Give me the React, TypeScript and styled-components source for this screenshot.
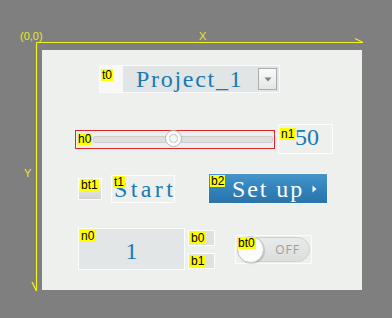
import React from "react";
import styled, { createGlobalStyle } from "styled-components";

const Global = createGlobalStyle`
  html, body { margin: 0; padding: 0; background: #7f7f7f; }
  #root { width: 392px; height: 318px; }
`;

const Stage = styled.div`
  position: relative;
  width: 392px;
  height: 318px;
  box-sizing: border-box;
  padding: 50px 0 0 42px;
  background: #7f7f7f;
  overflow: hidden;
  font-family: "Liberation Sans", Arial, sans-serif;
`;

const Canvas = styled.div`
  width: 320px;
  height: 240px;
  box-sizing: border-box;
  background: #edf0ed;
  display: flex;
  flex-direction: column;
`;

const Row = styled.div<{ top: number; left: number; gap?: number; h: number }>`
  display: flex;
  align-items: center;
  box-sizing: content-box;
  height: ${(p) => p.h}px;
  padding-top: ${(p) => p.top}px;
  padding-left: ${(p) => p.left}px;
  gap: ${(p) => p.gap ?? 0}px;
`;

const Group = styled.div<{ gap: number; column?: boolean }>`
  display: flex;
  flex-direction: ${(p) => (p.column ? "column" : "row")};
  align-items: center;
  gap: ${(p) => p.gap}px;
`;

const Axes = styled.svg`
  position: absolute;
  left: 0;
  top: 0;
  pointer-events: none;
`;

const AxisText = styled.span<{ x: number; y: number }>`
  position: absolute;
  left: ${(p) => p.x}px;
  top: ${(p) => p.y}px;
  color: #e8e829;
  font-family: "Liberation Sans", Arial, sans-serif;
  font-size: 11px;
  line-height: 11px;
`;

const Widget = styled.div<{ w: number; h: number }>`
  position: relative;
  flex: none;
  width: ${(p) => p.w}px;
  height: ${(p) => p.h}px;
  box-sizing: border-box;
`;

const Tag = styled.span<{ top?: number }>`
  position: absolute;
  left: 1px;
  top: ${(p) => p.top ?? 3}px;
  z-index: 2;
  background: #ffff00;
  color: #000;
  font-family: "Liberation Sans", Arial, sans-serif;
  font-size: 12px;
  line-height: 12px;
  height: 12px;
  padding: 0 1px;
`;

const BlueText = styled.span<{ spacing?: number }>`
  font-family: "Liberation Serif", "Times New Roman", serif;
  font-size: 24px;
  line-height: 24px;
  color: #1a78b4;
  letter-spacing: ${(p) => p.spacing ?? 0}px;
  white-space: pre;
`;

/* t0 combo */
const ComboBox = styled(Widget)`
  background: #f7f8f7;
  border: 1px solid #fbfbfb;
  display: flex;
`;
const ComboField = styled.div`
  margin-left: 23px;
  flex: 1;
  background: #e1e5e5;
  display: flex;
  align-items: center;
  padding-left: 13px;
  padding-right: 2px;
  justify-content: space-between;
`;
const DropBtn = styled.div`
  width: 19px;
  height: 22px;
  box-sizing: border-box;
  border: 1px solid #a9adad;
  background: linear-gradient(#fafafa, #e4e6e6);
  display: flex;
  align-items: center;
  justify-content: center;
`;

/* slider */
const SliderBox = styled(Widget)`
  border: 1px solid #e0262b;
  display: flex;
  align-items: center;
  padding-left: 17px;
  padding-right: 1px;
`;
const Track = styled.div`
  position: relative;
  flex: 1;
  height: 7px;
  box-sizing: border-box;
  background: #dedfdf;
  border: 1px solid #cdcfcf;
  border-radius: 2px;
`;
const Thumb = styled.div<{ pos: number }>`
  position: absolute;
  top: 50%;
  left: ${(p) => p.pos}%;
  width: 17px;
  height: 17px;
  margin: -9px 0 0 -9px;
  box-sizing: border-box;
  border-radius: 50%;
  border: 1px solid #b8baba;
  background: radial-gradient(circle, #f6f6f6 0 3px, #d8d8d8 3.5px 4.5px, #fbfbfb 5px);
`;

const NumBox = styled(Widget)`
  border: 1px solid #fdfdfd;
  display: flex;
  align-items: flex-end;
  padding-left: 16px;
  padding-bottom: 4px;
`;

const GrayBtn = styled(Widget)`
  border: 1px solid #fdfdfd;
  background: linear-gradient(#f3f3f3 0%, #e6e6e6 50%, #d3d3d3 100%);
`;

const TextBox = styled(Widget)`
  border: 1px solid #fdfdfd;
  display: flex;
  align-items: center;
  padding-left: 2px;
  padding-top: 1px;
`;

const BlueBtn = styled(Widget)`
  border: 1px solid #f3f6f8;
  background: linear-gradient(#4694c9 0%, #3283bd 50%, #2a73aa 100%);
  display: flex;
  align-items: center;
  padding-left: 23px;
  gap: 8px;
`;
const WhiteText = styled(BlueText)`
  color: #ffffff;
`;

const NumField = styled(Widget)`
  border: 1px solid #fdfdfd;
  background: #e3e6e6;
  display: flex;
  align-items: center;
  justify-content: center;
  padding-top: 4px;
`;

const SmallBtn = styled(Widget)`
  border: 1px solid #fdfdfd;
  background: #dfe1e1;
`;

const SwitchBox = styled(Widget)`
  border: 1px solid #fbfbfb;
  padding: 1px;
`;
const Pill = styled.div`
  height: 100%;
  box-sizing: border-box;
  border: 1px solid #d0d2d2;
  border-radius: 14px;
  background: linear-gradient(#e9eaea, #dcdddd);
  display: flex;
  align-items: center;
  justify-content: space-between;
  padding-right: 9px;
`;
const Knob = styled.div`
  width: 27px;
  height: 27px;
  margin-left: -1px;
  box-sizing: border-box;
  border-radius: 50%;
  border: 1px solid #c5c7c7;
  background: #fcfcfc;
  box-shadow: 1px 1px 1px rgba(0, 0, 0, 0.15);
`;
const OffText = styled.span`
  font-family: "Open Sans", "Liberation Sans", sans-serif;
  font-size: 12px;
  letter-spacing: 1px;
  color: #9c9e9e;
`;

export default function App() {
  return (
    <>
      <Global />
      <Stage>
        <Canvas>
          <Row top={15} left={57} h={28}>
            <ComboBox w={181} h={28}>
              <Tag>t0</Tag>
              <ComboField>
                <BlueText spacing={1.7}>Project_1</BlueText>
                <DropBtn>
                  <svg width="8" height="5" viewBox="0 0 8 5">
                    <path d="M0.5 0.5 L7.5 0.5 L4 4.5 Z" fill="#7d8282" />
                  </svg>
                </DropBtn>
              </ComboField>
            </ComboBox>
          </Row>

          <Row top={31} left={33} gap={3} h={30}>
            <SliderBox w={200} h={19}>
              <Tag top={2}>h0</Tag>
              <Track>
                <Thumb pos={45} />
              </Track>
            </SliderBox>
            <NumBox w={55} h={30}>
              <Tag>n1</Tag>
              <BlueText>50</BlueText>
            </NumBox>
          </Row>

          <Row top={19} left={36} gap={33} h={31}>
            <Group gap={9}>
              <GrayBtn w={24} h={22}>
                <Tag top={0}>bt1</Tag>
              </GrayBtn>
              <TextBox w={64} h={28}>
                <Tag top={0}>t1</Tag>
                <BlueText spacing={3.4}>Start</BlueText>
              </TextBox>
            </Group>
            <BlueBtn w={120} h={31}>
              <Tag top={1}>b2</Tag>
              <WhiteText spacing={1.9}>Set up</WhiteText>
              <svg width="5" height="8" viewBox="0 0 5 8">
                <path d="M0.5 0.5 L4.5 4 L0.5 7.5 Z" fill="#ffffff" />
              </svg>
            </BlueBtn>
          </Row>

          <Row top={24} left={36} gap={20} h={42}>
            <Group gap={3}>
              <NumField w={107} h={42}>
                <Tag top={1}>n0</Tag>
                <BlueText>1</BlueText>
              </NumField>
              <Group gap={7} column>
                <SmallBtn w={27} h={16}>
                  <Tag top={1}>b0</Tag>
                </SmallBtn>
                <SmallBtn w={27} h={16}>
                  <Tag top={1}>b1</Tag>
                </SmallBtn>
              </Group>
            </Group>
            <SwitchBox w={77} h={29}>
              <Pill>
                <Knob />
                <OffText>OFF</OffText>
              </Pill>
              <Tag top={1}>bt0</Tag>
            </SwitchBox>
          </Row>
        </Canvas>

        <Axes width="392" height="318" viewBox="0 0 392 318">
          <g stroke="#f2f21c" strokeWidth="1.2" fill="none">
            <line x1="36.5" y1="42.5" x2="363" y2="42.5" />
            <line x1="355" y1="38.5" x2="363" y2="42.5" />
            <line x1="36.5" y1="42.5" x2="36.5" y2="291" />
            <line x1="32" y1="282" x2="36.5" y2="291" />
          </g>
        </Axes>
        <AxisText x={20} y={31}>(0,0)</AxisText>
        <AxisText x={199} y={31}>X</AxisText>
        <AxisText x={24} y={168}>Y</AxisText>
      </Stage>
    </>
  );
}
